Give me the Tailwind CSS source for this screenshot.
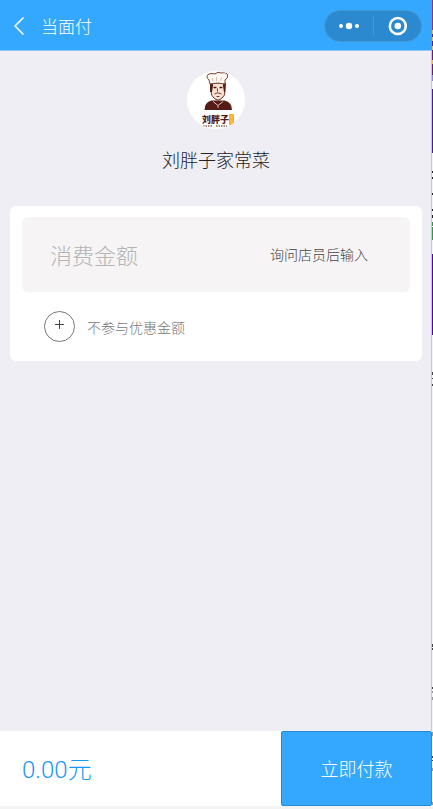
<!DOCTYPE html>
<html lang="zh-CN">
  <head>
    <meta charset="UTF-8" />
    <meta name="viewport" content="width=device-width, initial-scale=1.0" />
    <title>当面付</title>
    <script src="https://cdn.jsdelivr.net/npm/@tailwindcss/browser@4"></script>
  </head>
  <body class="flex min-h-screen bg-[#f3f3f5] font-['Noto_Sans_CJK_SC',sans-serif] font-light">
    <div class="flex min-w-0 flex-1 flex-col">
      <!-- Header -->
      <header class="flex h-[51px] items-center border-b border-[#8fc8f5] bg-[#34a8ff] pt-px pr-[10px] pl-3 text-white">
        <button aria-label="返回" class="mr-4 flex">
          <svg class="h-5 w-[13px]" viewBox="0 0 13 20" fill="none" stroke="currentColor" stroke-width="1.5">
            <path d="M11.5 1.5 3 10l8.500 8.500" />
          </svg>
        </button>
        <h1 class="flex-1 text-[17px] leading-6">当面付</h1>
        <div class="flex h-8 w-[98px] items-center rounded-full border border-[#4797d1] bg-[#2b89cf]">
          <button aria-label="更多" class="flex flex-1 justify-center">
            <svg class="h-5 w-6" viewBox="0 0 24 20" fill="currentColor">
              <circle cx="4" cy="10" r="2" />
              <circle cx="12" cy="10" r="3.200" />
              <circle cx="20" cy="10" r="2" />
            </svg>
          </button>
          <span class="h-5 w-px bg-[#4797d1]"></span>
          <button aria-label="关闭" class="flex flex-1 justify-center">
            <svg class="size-5" viewBox="0 0 20 20" fill="none" stroke="currentColor">
              <circle cx="10.800" cy="10" r="8" stroke-width="2.500" />
              <circle cx="10.800" cy="10" r="3.300" fill="currentColor" stroke="none" />
            </svg>
          </button>
        </div>
      </header>

      <main class="flex-1 border-r border-[#c9c9cc] bg-[#efeef4] pr-[9px] pl-[10px] pt-5">
        <!-- Shop -->
        <div class="flex flex-col items-center">
          <svg class="size-[58px]" viewBox="0 0 58 58" role="img" aria-label="刘胖子">
            <clipPath id="disc"><circle cx="29" cy="29" r="29" /></clipPath>
            <circle cx="29" cy="29" r="29" fill="#fff" />
            <g clip-path="url(#disc)">
              <path d="M17.500 39q0-8 7-9.500l13 0q7.500 1.500 7.500 9.500z" fill="#571b16" />
              <path d="M24 12v8q0 5 3 7 4 4 8 0 3-2 3-7v-8z" fill="#f9e3d2" stroke="#6d3027" />
              <path d="M23 12h3v3l-1 6h-2zM36 12h3l-1 9h-1l-1-6z" fill="#571b16" />
              <path d="M23 13 22 9q-4-4 0-6 3-1 6 0 3-3 6-1 6-1 6.500 2 1 3-2.500 5v4q-7-2-15 0z" fill="#fffaf4" stroke="#7a4034" />
              <path d="M26 10.500 25.500 7m4 3V6m4 4 1-3.500" stroke="#c4a396" stroke-width=".7" fill="none" />
              <path d="M26.500 16.500h3m3 0h3" stroke="#571b16" stroke-width="1.500" />
              <path d="M30.500 17.500v3m-3 2.500q3-2.500 7 0m-5 2.500h3" stroke="#7a3a30" fill="none" />
              <path d="m26 30.500 5 4 5-4m-5 4v2.500" stroke="#f3e6df" stroke-width=".8" fill="none" />
              <text x="15" y="52" font-size="9" font-weight="900" fill="#571b16">刘胖子</text>
              <rect x="42" y="43" width="5" height="11" rx="1" fill="#f4ae27" />
              <path d="M43.500 45h2m-2 2h2m-2 3h2m-2 2h2" stroke="#fad68c" stroke-width=".8" />
              <path d="M16 55h9m4 0h11" stroke="#8c625c" stroke-width="1.500" stroke-dasharray="1.500 1" />
            </g>
          </svg>
          <h2 class="mt-[18px] text-lg leading-6 text-[#222]">刘胖子家常菜</h2>
        </div>

        <!-- Amount -->
        <section class="mt-[35px] rounded-md bg-white px-3 pt-[11px] pb-[19px]">
          <div class="flex h-[75px] items-center rounded-md bg-[#f6f4f5] pr-[42px] pb-0.5 pl-7">
            <label for="amount" class="text-[22px] leading-8 text-[#b4b4b4]">消费金额</label>
            <input id="amount" type="text" inputmode="decimal" placeholder="询问店员后输入" class="min-w-0 flex-1 text-right text-sm leading-5 text-[#444] outline-none placeholder:text-[#444]" />
          </div>
          <button class="mt-[19px] ml-[22px] flex items-center gap-3 text-sm text-[#777]">
            <svg class="size-[31px]" viewBox="0 0 31 31" fill="none">
              <circle cx="15.500" cy="15.500" r="15" stroke="#777" />
              <path d="M11 13.500h9M15.500 9v9" stroke="#444" />
            </svg>
            不参与优惠金额
          </button>
        </section>
      </main>

      <!-- Pay bar -->
      <footer class="flex h-[78px] border-b-3 border-[#f3f3f3] bg-white">
        <div class="flex flex-1 items-center pt-0.5 pl-[22px] font-[Roboto,'Noto_Sans_CJK_SC',sans-serif] text-2xl text-[#1c96f5]">0.00元</div>
        <button class="w-[35%] rounded-xs border border-[#2589d4] bg-[#34a8ff] pb-0.5 text-lg text-white">立即付款</button>
      </footer>
    </div>

    <!-- Sliver of the window behind -->
    <svg class="w-px shrink-0" height="809" viewBox="0 0 1 809" aria-hidden="true" shape-rendering="crispEdges">
      <path stroke="#a52a6a" d="M.5 0v30" />
      <path stroke="#6a1b78" d="M.5 30v45" />
      <path stroke="#f0b848" d="M.5 30v4m0 3v4m0 5v4m0 10v4" />
      <path stroke="#8d80e0" d="M.5 75v6" />
      <path stroke="#4a1a98" d="M.5 89v64" />
      <path stroke="#222" d="M.5 171v2m0 4v2m0 14v2m0 14v2m0 4v3" />
      <path stroke="#2f9a45" d="M.5 222v4m0 1v13" />
      <path stroke="#5500a8" d="M.5 254v81" />
      <path stroke="#444" d="M.5 372v3m0 3v1m0 5v2m0 258v3m0 1v2m0 37v2m0 67v2m0 2v1" />
      <path stroke="#999" d="M.5 691v2m0 4v3m0 32v4m0 32v3m0 31v3" />
    </svg>
  </body>
</html>
